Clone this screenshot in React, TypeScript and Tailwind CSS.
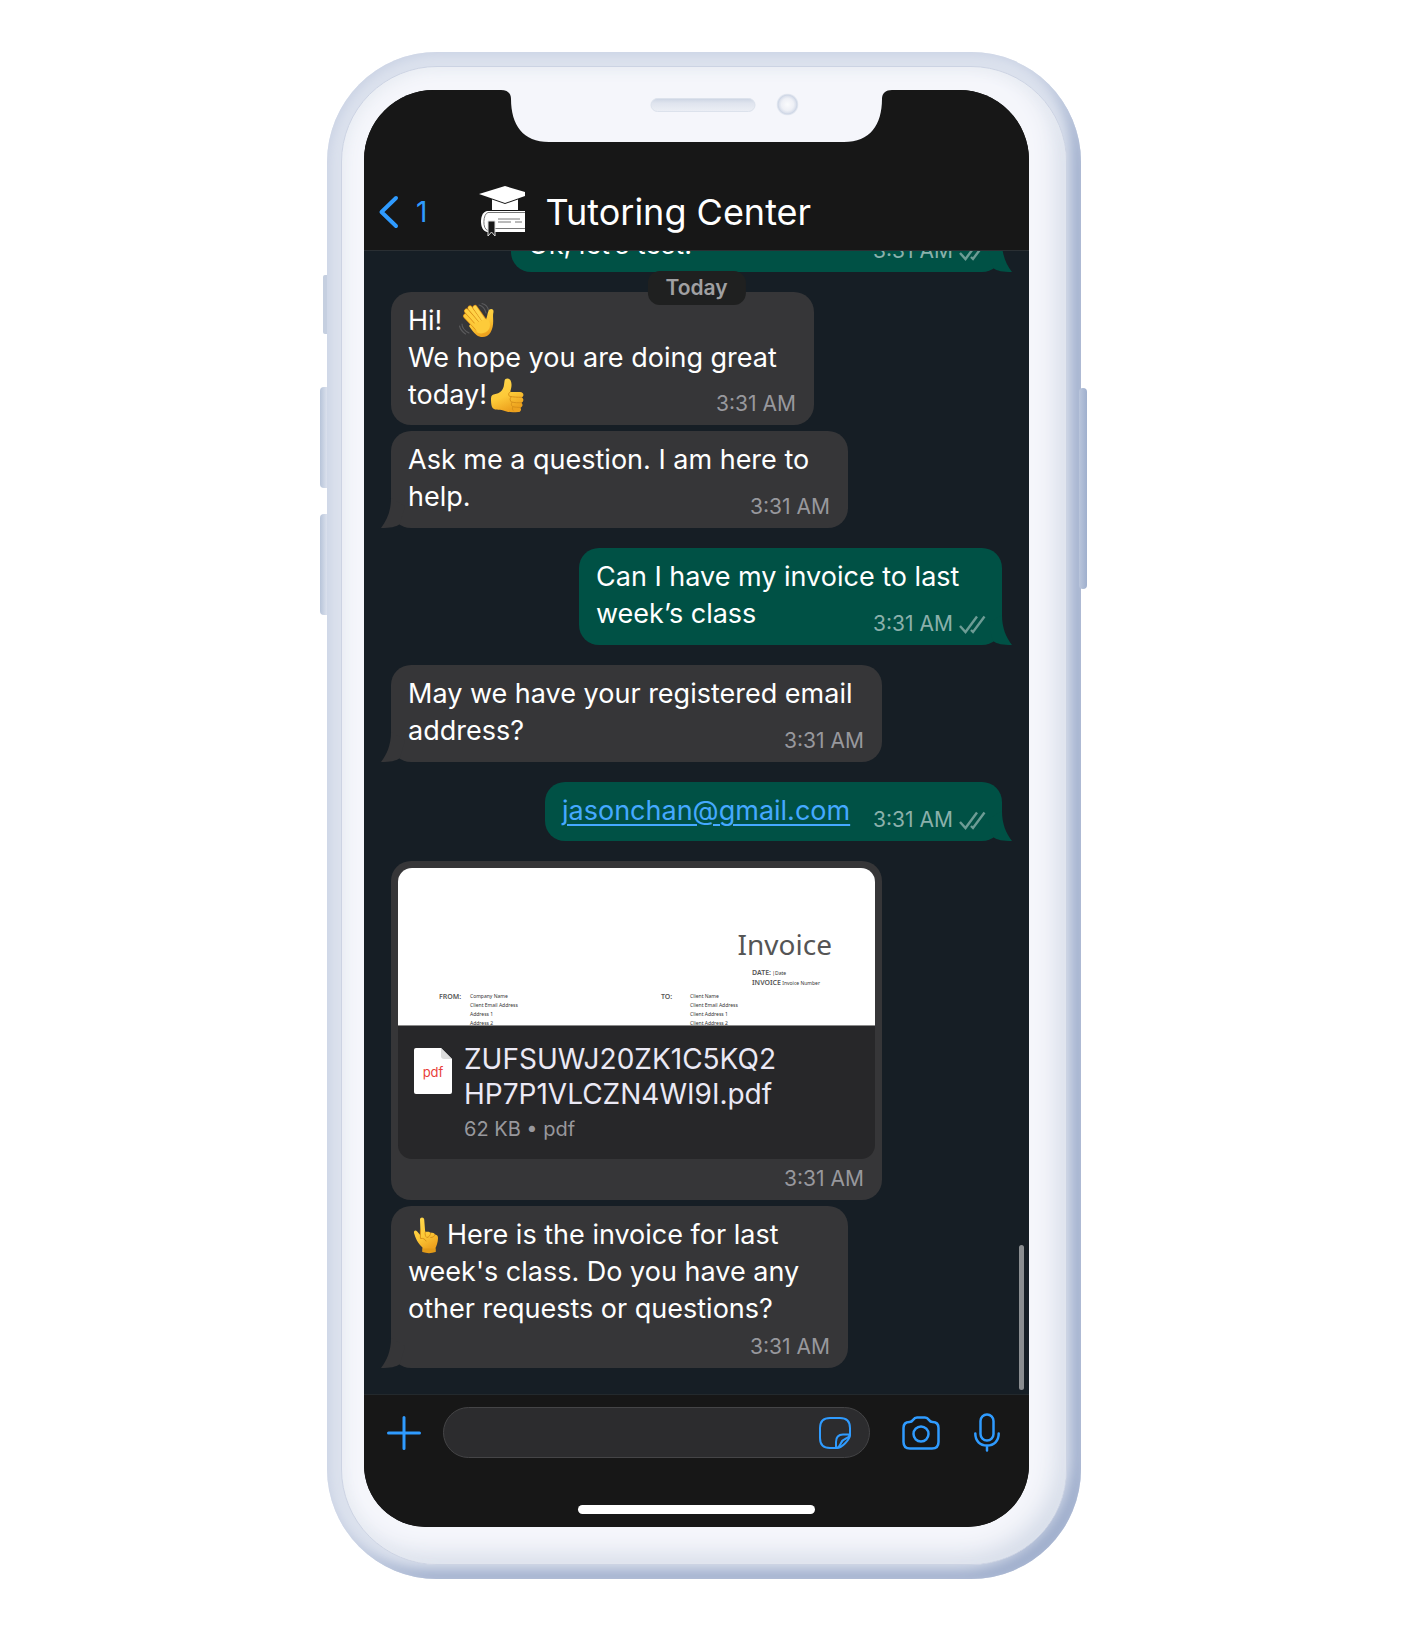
import React from "react";

const gold = (id: string) => (
  <linearGradient id={id} x1="0" y1="0" x2="0.4" y2="1">
    <stop offset="0" stopColor="#ffd94f" />
    <stop offset="0.6" stopColor="#fdc938" />
    <stop offset="1" stopColor="#eda21e" />
  </linearGradient>
);

function WaveEmoji() {
  return (
    <svg role="img" aria-label="Waving hand" viewBox="0 0 38 38" className="-mt-[10px] -mb-[6px] ml-4 inline-block size-[38px] align-middle">
      <defs>{gold("wave")}</defs>
      <g stroke="#5a5a5c" strokeWidth="1.1" fill="none" strokeLinecap="round">
        <path d="M21 3c4 1 6 4 7 8M24 1.500c4 1 6 4 6.500 7" />
        <path d="M4 22c0 4 3 7 7 9M1.500 24c1 4 3 6 6 8" />
      </g>
      <path
        d="M17 15 27 17.500C29.500 18 29 9.500 31.500 7.500c2-1.500 4.500 0 4 2.500-.8 3-.3 5-.3 9 0 4-.6 8-2.700 11.500-3 5-9.500 6-14 2.500-3-2.500-5.500-6-7.500-9Z"
        fill="url(#wave)"
      />
      <g strokeLinecap="round" fill="none">
        <path d="M7.500 14 19 26" stroke="#d98d17" strokeWidth="5" />
        <path d="M7.500 14 19 26" stroke="#fdc938" strokeWidth="3.800" />
        <path d="M8.500 9 22 24" stroke="#d98d17" strokeWidth="5" />
        <path d="M8.500 9 22 24" stroke="#ffd040" strokeWidth="3.800" />
        <path d="M12 6 25 21.500" stroke="#d98d17" strokeWidth="5" />
        <path d="M12 6 25 21.500" stroke="#ffd346" strokeWidth="3.800" />
        <path d="M17 5.500 27 19.500" stroke="#d98d17" strokeWidth="5" />
        <path d="M17 5.500 27 20" stroke="#ffd64c" strokeWidth="3.800" />
      </g>
      <path d="M15 22 27 17c5 0 6 6 4 10s-9 6-12 3Z" fill="#fdcb3a" />
    </svg>
  );
}

function ThumbEmoji() {
  return (
    <svg role="img" aria-label="Thumbs up" viewBox="0 0 36 38" className="-mt-[10px] -mb-[6px] ml-0.5 inline-block h-[38px] w-9 align-middle">
      <defs>{gold("thumb")}</defs>
      <path
        d="M2 22.500c0-3 1.500-4 4.500-4.500 4-.7 6-2.500 7.500-5.500 1.300-2.700 1-5 1.600-8 .5-2.700 4.500-2.700 6 0 1.700 3.500.8 7.500-.4 11.500H31c4 0 4.500 4.500 1.500 5.300 2.700 1.200 2.300 4.700-.2 5.400 2 1.400 1.500 4.200-1 4.800 1.500 1.800.5 4.500-2 4.500-7 .5-11 .2-15-1.500C10 33 5 35 3 31c-1-2.500-1-6-1-8.500Z"
        fill="url(#thumb)"
      />
      <g stroke="#d9921a" strokeWidth="1" fill="none" strokeLinecap="round">
        <path d="M21.200 16c-1.700.6-2.200 2.700-.7 4.300 3.500.8 8 1 12 1" />
        <path d="M22 21c-1.500 1.600-1 4 .5 5 3 .8 7 .9 9.800.7" />
        <path d="M23 26.300c-1.200 1.500-.7 3.500.7 4.400 2.300.6 5.300.8 7.600.8" />
        <path d="M23.800 31c-.9 1.400-.4 2.900.8 4" />
      </g>
    </svg>
  );
}

function PointUpEmoji() {
  return (
    <svg role="img" aria-label="Pointing up" viewBox="0 0 38 38" className="-mt-[10px] -mb-[6px] mr-px inline-block size-[38px] align-middle">
      <defs>{gold("point")}</defs>
      <path
        d="M12 3.500c0-2.700 4-2.700 4.200 0l1 12.500c3-.8 5 0 5.500 1 2.300-.6 4 .3 4.300 1.700 2.300 0 3.200 1.500 3 4-.2 4-1.500 7-2.500 9.300V36H14.500v-4.500C9.500 27 7.500 22 6 17c-.5-2.700 1.700-3.500 3.200-1.500l3.400 4Z"
        fill="url(#point)"
      />
      <g stroke="#d9921a" strokeWidth="1" fill="none" strokeLinecap="round">
        <path d="M12.400 14v8.500c2.800-.5 4.600.5 5.600 2.500" />
        <path d="M17.300 16c-.5 2.300 0 4.500 1.500 5.500 2-.2 3.500-1.800 4-4.500M22.700 21.500c2 .2 3.800-1 4.300-2.800" />
      </g>
      <path d="M14.500 32.500h13V36c-4 1.500-9 1.500-13 0Z" fill="#e29a18" />
    </svg>
  );
}

function Tail({ sent }: { sent?: boolean }) {
  return sent ? (
    <svg viewBox="0 0 32 30" aria-hidden="true" className="absolute -right-[10px] bottom-0 h-[30px] w-8">
      <path d="M22 0c0 13 4 22 10 30-9 0-15-1-19-4L8 8Z" fill="#005145" />
    </svg>
  ) : (
    <svg viewBox="0 0 32 30" aria-hidden="true" className="absolute bottom-0 -left-[10px] h-[30px] w-8">
      <path d="M10 0c0 13-4 22-10 30 9 0 15-1 19-4l5-18Z" fill="#363638" />
    </svg>
  );
}

function Ticks() {
  return (
    <svg viewBox="0 0 27 19" aria-hidden="true" className="h-[19px] w-[27px]" fill="none" stroke="#6d9c95" strokeWidth="2.400">
      <path d="m1 11 5.500 6L18 1.500M12 15l2 2L25.500 1.500" />
    </svg>
  );
}

function Time({ sent }: { sent?: boolean }) {
  return (
    <span className={`absolute bottom-2 flex items-center gap-1.5 text-[21px] leading-[26px] ${sent ? "right-4" : "right-[18px]"}`}>
      <time className={sent ? "text-[#8bb0ab]" : "text-[#98989d]"}>3:31 AM</time>
      {sent && <Ticks />}
    </span>
  );
}

type BubbleProps = {
  sent?: boolean;
  tail?: boolean;
  gap: string;
  size: string;
  children: React.ReactNode;
};

function Bubble({ sent, tail = true, gap, size, children }: BubbleProps) {
  return (
    <li className={`flex ${sent ? "justify-end" : "justify-start"} ${gap}`}>
      <div
        className={`relative max-w-full rounded-[20px] text-[27px] leading-[37px] text-white ${
          sent ? "bg-[#005145]" : "bg-[#363638]"
        } ${size}`}
      >
        {children}
        <Time sent={sent} />
        {tail && <Tail sent={sent} />}
      </div>
    </li>
  );
}

function Copy({ children }: { children: React.ReactNode }) {
  return <p className="px-[17px] pt-[10px] whitespace-pre-line">{children}</p>;
}

function GraduationLogo() {
  return (
    <svg viewBox="0 0 48 51" aria-hidden="true" className="ml-[51px] h-[51px] w-12">
      <path d="M1 8 27 0l20 6v4L27 17Z" fill="#fff" />
      <path d="M14 13.500 27 18l13-4.500V24H14Z" fill="#fff" />
      <path d="M47 25H9c-8 1-8 20 0 21h38Z" fill="#fff" />
      <path d="M47 26.500H10c-5 1-6 17 0 18M47 42.500H17M20 33h22M20 36h13M37 36h7" fill="none" stroke="#777" strokeWidth="1" />
      <path d="M10 35h7v15l-3.500-4-3.500 4Z" fill="#171717" stroke="#ddd" strokeWidth="1" />
    </svg>
  );
}

function Notch() {
  return (
    <svg viewBox="0 0 391 52" aria-hidden="true" className="h-[52px] w-[391px]">
      <defs>
        <linearGradient id="speaker" x1="0" y1="0" x2="0" y2="1">
          <stop offset="0" stopColor="#ccd4e3" />
          <stop offset="0.35" stopColor="#dfe4ee" />
          <stop offset="1" stopColor="#eceff5" />
        </linearGradient>
        <radialGradient id="camera">
          <stop offset="0" stopColor="#fafbfd" />
          <stop offset="0.55" stopColor="#eef0f6" />
          <stop offset="0.75" stopColor="#dde2ed" />
          <stop offset="0.85" stopColor="#cfd7e6" />
          <stop offset="1" stopColor="#eceff5" />
        </radialGradient>
      </defs>
      <path d="M0 0c6 0 10 3 10 9 0 26 12 43 38 43h295c26 0 38-17 38-43 0-6 4-9 10-9Z" fill="#f5f6fb" />
      <rect x="150" y="8.500" width="104" height="13" rx="6.500" fill="url(#speaker)" stroke="#dce2ec" />
      <circle cx="286.500" cy="14.500" r="11" fill="url(#camera)" />
    </svg>
  );
}

function InvoicePreview() {
  return (
    <div className="h-[158px] overflow-hidden border-b border-[#8a8a8a] bg-white pt-[56px] pr-[43px] pl-[41px] font-['Noto_Sans'] text-[5px] leading-[9px] text-[#333]">
      <p className="text-right text-[28px] leading-[40px] text-[#555]">Invoice</p>
      <div className="mt-[4px] ml-auto w-20">
        <p>
          <b className="text-[7px] font-semibold text-[#555]">DATE:</b> |Date
        </p>
        <p>
          <b className="text-[7px] font-semibold text-[#555]">INVOICE</b> Invoice Number
        </p>
      </div>
      <div className="mt-[4px] flex">
        <b className="w-[31px] text-[7px] leading-[10px] font-semibold text-[#555]">FROM:</b>
        <p className="w-[191px]">
          Company Name
          <br />
          Client Email Address
          <br />
          Address 1
          <br />
          Address 2
        </p>
        <b className="w-[29px] text-[7px] leading-[10px] font-semibold text-[#555]">TO:</b>
        <p>
          Client Name
          <br />
          Client Email Address
          <br />
          Client Address 1
          <br />
          Client Address 2
        </p>
      </div>
    </div>
  );
}

function PdfIcon() {
  return (
    <svg viewBox="0 0 38 46" role="img" aria-label="PDF file" className="mt-[22px] h-[46px] w-[38px] shrink-0">
      <path d="M2 0h25l11 11v33a2 2 0 0 1-2 2H2a2 2 0 0 1-2-2V2a2 2 0 0 1 2-2Z" fill="#fff" />
      <path d="M27 0v8a3 3 0 0 0 3 3h8Z" fill="#dcdcdc" />
      <text x="19" y="29" textAnchor="middle" fontSize="13" fill="#e8403a" fontFamily="Inter, sans-serif">
        pdf
      </text>
    </svg>
  );
}

function Header() {
  return (
    <header className="border-b border-[#2a2f33] bg-[#171717]">
      <div className="flex justify-center">
        <Notch />
      </div>
      <div className="flex h-[108px] items-center pt-[31px] pl-[14px]">
        <button aria-label="Back, 1 unread chat" className="flex items-center gap-[16px] text-[28px] leading-9 text-[#2f9bff]">
          <svg viewBox="0 0 22 34" className="h-[34px] w-[22px]" fill="none" stroke="currentColor" strokeWidth="4" strokeLinecap="round" strokeLinejoin="round">
            <path d="M18 3 3.500 17 18 31" />
          </svg>
          1
        </button>
        <GraduationLogo />
        <h1 className="ml-[19px] text-[36px] leading-[44px] text-white">Tutoring Center</h1>
      </div>
    </header>
  );
}

function Composer() {
  return (
    <footer className="border-t border-[#23292d] bg-[#171717] pb-[13px]">
      <form className="flex items-center pt-3 pr-[29px] pl-[23px] text-[#2f9bff]" onSubmit={(e) => e.preventDefault()}>
        <button type="button" aria-label="Attach">
          <svg viewBox="0 0 34 34" className="size-[34px]" stroke="currentColor" strokeWidth="3" strokeLinecap="round">
            <path d="M17 1.500v31M1.500 17h31" />
          </svg>
        </button>
        <div className="ml-[22px] flex h-[51px] min-w-0 flex-1 items-center rounded-full border border-[#454547] bg-[#2c2c2e] pr-[18px] pl-5">
          <input aria-label="Message" className="min-w-0 flex-1 bg-transparent text-[27px] text-white outline-none" />
          <button type="button" aria-label="Stickers">
            <svg viewBox="0 0 32 32" className="size-8" fill="none" stroke="currentColor" strokeWidth="2" strokeLinejoin="round">
              <path d="M18 31h-7C4.500 31 1 27.500 1 21V11C1 4.500 4.500 1 11 1h10c6.500 0 10 3.500 10 10v7c0 4-8 13-13 13Z" />
              <path d="M17 31v-6c0-5 2-7.500 7-7.500H31M18 31c2.500-1 3-3 4-5s2.500-3.500 5-4.500c2.200-.9 3.500-2 4-4" />
            </svg>
          </button>
        </div>
        <button type="button" aria-label="Camera" className="ml-8">
          <svg viewBox="0 0 38 34" className="h-[34px] w-[38px]" fill="none" stroke="currentColor" strokeWidth="2.500" strokeLinejoin="round">
            <path d="M8 32.500h22c4.500 0 6.500-2 6.500-6.500V12c0-4-2-6-6-6-2 0-2.500-.5-3.500-2s-2-2.500-4-2.500h-8c-2 0-3 1-4 2.500s-1.500 2-3.500 2c-4 0-6 2-6 6v14c0 4.500 2 6.500 6.500 6.500Z" />
            <circle cx="19" cy="18" r="7.500" />
          </svg>
        </button>
        <button type="button" aria-label="Record voice message" className="ml-[34px]">
          <svg viewBox="0 0 26 39" className="h-[39px] w-[26px]" fill="none" stroke="currentColor" strokeWidth="2.500" strokeLinecap="round">
            <rect x="6.500" y="1.500" width="13" height="26" rx="6.500" />
            <path d="M1.300 20.500c0 7.500 4.700 12 11.700 12s11.700-4.500 11.700-12M13 32.500v5" />
          </svg>
        </button>
      </form>
      <div className="mx-auto mt-[47px] h-[9px] w-[237px] rounded-full bg-white" />
    </footer>
  );
}

export default function App() {
  return (
    <main className="flex min-h-screen items-start justify-center bg-white py-[52px] font-['Inter',sans-serif]">
      <div aria-hidden="true" className="flex w-[7px] shrink-0 flex-col items-end pt-[223px]">
        <div className="h-[59px] w-1 rounded-l-xs bg-[#c5cfe0]" />
        <div className="mt-[53px] h-[101px] w-[7px] rounded-l-sm bg-linear-to-r from-[#b7c4d9] to-[#dbe1ed]" />
        <div className="mt-[26px] h-[101px] w-[7px] rounded-l-sm bg-linear-to-r from-[#b7c4d9] to-[#dbe1ed]" />
      </div>

      <div className="w-full max-w-[754px] rounded-[110px] bg-[#dbe1ed] p-[14px] shadow-[inset_3px_3px_10px_#ccd4e5,inset_-14px_-14px_14px_-4px_#a0afcd]">
        <div className="rounded-[96px] border border-[#ccd3e3] bg-[#f5f6fb] pt-[23px] pr-[37px] pb-[37px] pl-[22px] shadow-[inset_4px_4px_14px_#e9edf3,inset_-12px_-12px_24px_-4px_#d3dae7]">
          <div className="overflow-hidden rounded-t-[70px] rounded-b-[62px] bg-[#171717]">
            <Header />

            <div className="relative overflow-hidden bg-[#161e25] pr-[27px] pb-[26px] pl-[27px]">
              <ol>
                <Bubble sent gap="-mt-[38px]" size="h-[59px] w-[491px] pt-[3px]">
                  <Copy>Ok, let’s test.</Copy>
                </Bubble>
                <Bubble tail={false} gap="mt-5" size="h-[133px] w-[423px]">
                  <Copy>
                    Hi!
                    <WaveEmoji />
                    {"\nWe hope you are doing great\ntoday!"}
                    <ThumbEmoji />
                  </Copy>
                </Bubble>
                <Bubble gap="mt-1.5" size="h-[97px] w-[457px]">
                  <Copy>{"Ask me a question. I am here to\nhelp."}</Copy>
                </Bubble>
                <Bubble sent gap="mt-5" size="h-[97px] w-[423px]">
                  <Copy>{"Can I have my invoice to last\nweek’s class"}</Copy>
                </Bubble>
                <Bubble gap="mt-5" size="h-[97px] w-[491px]">
                  <Copy>{"May we have your registered email\naddress?"}</Copy>
                </Bubble>
                <Bubble sent gap="mt-5" size="h-[59px] w-[457px]">
                  <Copy>
                    <a href="mailto:jasonchan@gmail.com" className="text-[#45a9ff] underline decoration-2 underline-offset-4">
                      jasonchan@gmail.com
                    </a>
                  </Copy>
                </Bubble>
                <Bubble tail={false} gap="mt-5" size="w-[491px] px-[7px] pt-[7px] pb-[41px]">
                  <div className="overflow-hidden rounded-[14px] bg-[#272729]">
                    <InvoicePreview />
                    <div className="flex h-[133px] gap-[12px] px-4">
                      <PdfIcon />
                      <div className="pt-4 text-[28px] leading-[35px] text-[#ebe9f5]">
                        <p>
                          ZUFSUWJ20ZK1C5KQ2
                          <br />
                          HP7P1VLCZN4WI9I.pdf
                        </p>
                        <p className="mt-[2px] text-[20px] leading-[30px] text-[#98989d]">62 KB • pdf</p>
                      </div>
                    </div>
                  </div>
                </Bubble>
                <Bubble gap="mt-1.5" size="h-[162px] w-[457px]">
                  <Copy>
                    <PointUpEmoji />
                    {"Here is the invoice for last\nweek's class. Do you have any\nother requests or questions?"}
                  </Copy>
                </Bubble>
              </ol>
              <p className="absolute top-5 left-1/2 flex h-[34px] -translate-x-1/2 items-center rounded-xl bg-[#1f2020] px-[18px] text-[21px] font-semibold text-[#a0a0a2]">
                Today
              </p>
              <div className="absolute right-[5px] bottom-1 h-[145px] w-[5px] rounded-full bg-[#8b8e91]" />
            </div>

            <Composer />
          </div>
        </div>
      </div>

      <div aria-hidden="true" className="flex w-[7px] shrink-0 flex-col pt-[336px]">
        <div className="-ml-[2px] h-[201px] w-2 rounded-sm bg-linear-to-r from-[#bac6dc] to-[#9fafcd]" />
      </div>
    </main>
  );
}
